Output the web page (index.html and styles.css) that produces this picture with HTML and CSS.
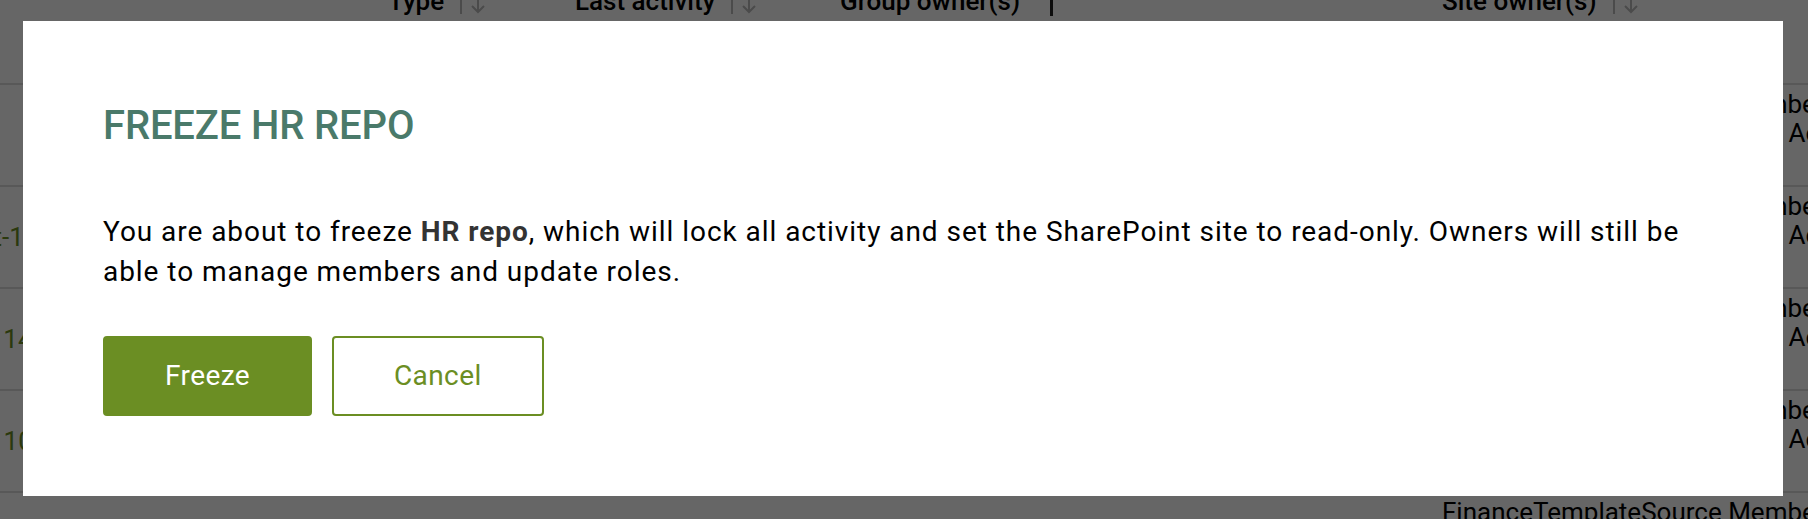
FILE: index.html
```html
<!DOCTYPE html>
<html lang="en">
<head>
<meta charset="utf-8">
<title>Freeze HR repo</title>
<link rel="stylesheet" href="styles.css">
</head>
<body>
<div class="page">
  <div class="grid thead">
    <div class="th"></div>
    <div class="th"><span>Type</span><i class="sep"></i><svg class="sort" width="16" height="24" viewBox="0 0 16 24"><path d="M8 2v19M2 15l6 6 6-6"/></svg></div>
    <div class="th"><span>Last activity</span><i class="sep"></i><svg class="sort" width="16" height="24" viewBox="0 0 16 24"><path d="M8 2v19M2 15l6 6 6-6"/></svg></div>
    <div class="th"><span>Group owner(s)</span><i class="resize"></i></div>
    <div class="th"><span>Site owner(s)</span><i class="sep"></i><svg class="sort" width="16" height="24" viewBox="0 0 16 24"><path d="M8 2v19M2 15l6 6 6-6"/></svg></div>
  </div>
  <div class="grid row">
    <div class="cell name">Docs</div>
    <div class="cell"></div>
    <div class="cell"></div>
    <div class="cell"></div>
    <div class="cell owners">FinanceTemplateSource Members<br>FinanceTemplateSource Data Access</div>
  </div>
  <div class="grid row">
    <div class="cell name">Sprint-12</div>
    <div class="cell"></div>
    <div class="cell"></div>
    <div class="cell"></div>
    <div class="cell owners">FinanceTemplateSource Members<br>FinanceTemplateSource Data Access</div>
  </div>
  <div class="grid row">
    <div class="cell name">Legal 14</div>
    <div class="cell"></div>
    <div class="cell"></div>
    <div class="cell"></div>
    <div class="cell owners">FinanceTemplateSource Members<br>FinanceTemplateSource Data Access</div>
  </div>
  <div class="grid row">
    <div class="cell name">Sales 10</div>
    <div class="cell"></div>
    <div class="cell"></div>
    <div class="cell"></div>
    <div class="cell owners">FinanceTemplateSource Members<br>FinanceTemplateSource Data Access</div>
  </div>
  <div class="grid row">
    <div class="cell name">Wiki</div>
    <div class="cell"></div>
    <div class="cell"></div>
    <div class="cell"></div>
    <div class="cell owners">FinanceTemplateSource Members<br>FinanceTemplateSource Data Access</div>
  </div>
</div>

<div class="overlay">
  <div class="modal" role="dialog" aria-labelledby="freeze-title">
    <h2 class="modal-title" id="freeze-title">FREEZE HR REPO</h2>
    <p class="modal-text">You are about to freeze <strong>HR repo</strong>, which will lock all activity and set the SharePoint site to read-only. Owners will still be able to manage members and update roles.</p>
    <div class="actions">
      <button class="btn btn-primary" type="button">Freeze</button>
      <button class="btn btn-secondary" type="button">Cancel</button>
    </div>
  </div>
</div>
</body>
</html>
```

FILE: styles.css
```css
html, body {
  margin: 0;
  overflow: hidden;
}

body {
  width: 1808px;
  height: 519px;
  background: #ffffff;
  color: #000000;
  font-family: Roboto, "Liberation Sans", sans-serif;
}

/* background table (page scrolled) */
.page {
  margin: -14px 0 0 -66px;
  width: 2100px;
}

.grid {
  display: grid;
  grid-template-columns: 454px 187px 265px 602px 500px;
}

.thead {
  padding-bottom: 67px;
  border-bottom: 2px solid #dddddd;
  font-size: 26px;
  font-weight: 500;
  line-height: 30px;
}

.th {
  display: flex;
  align-items: center;
  white-space: nowrap;
}

.sep {
  display: block;
  width: 2px;
  height: 26px;
  background: #bbbbbb;
  margin-left: 16px;
}

.sort {
  display: block;
  margin-left: 8px;
  margin-top: 4px;
}

.sort path {
  fill: none;
  stroke: #bbbbbb;
  stroke-width: 2;
}

.resize {
  display: block;
  width: 3px;
  height: 30px;
  background: #222222;
  margin-left: 30px;
}

.row {
  height: 100px;
  border-bottom: 2px solid #dddddd;
  font-size: 26px;
}

.cell {
  align-self: center;
  line-height: 31px;
  white-space: nowrap;
}

.name {
  color: #6b8e23;
}

.owners {
  align-self: start;
  padding-top: 5px;
  line-height: 29px;
}

/* modal */
.overlay {
  position: fixed;
  inset: 0;
  background: rgba(0, 0, 0, 0.6);
  padding: 21px 0 0 23px;
}

.modal {
  width: 1760px;
  box-sizing: border-box;
  padding: 80px;
  background: #ffffff;
}

.modal-title {
  margin: 0 0 61px;
  font-size: 40px;
  line-height: 50px;
  font-weight: 500;
  letter-spacing: -0.15px;
  color: #4a7a6a;
}

.modal-text {
  margin: 0 0 44px;
  font-size: 28px;
  line-height: 40px;
  letter-spacing: 0.95px;
  color: #000000;
}

.modal-text strong {
  font-weight: 700;
  color: #333333;
}

.actions {
  display: flex;
  gap: 20px;
}

.btn {
  height: 80px;
  box-sizing: border-box;
  padding: 0 60px;
  border: 2px solid #6b8e23;
  border-radius: 4px;
  font-family: inherit;
  font-size: 28px;
  letter-spacing: 0.4px;
  line-height: 1;
}

.btn-primary {
  background: #6b8e23;
  color: #ffffff;
}

.btn-secondary {
  background: #ffffff;
  color: #6b8e23;
}
```
